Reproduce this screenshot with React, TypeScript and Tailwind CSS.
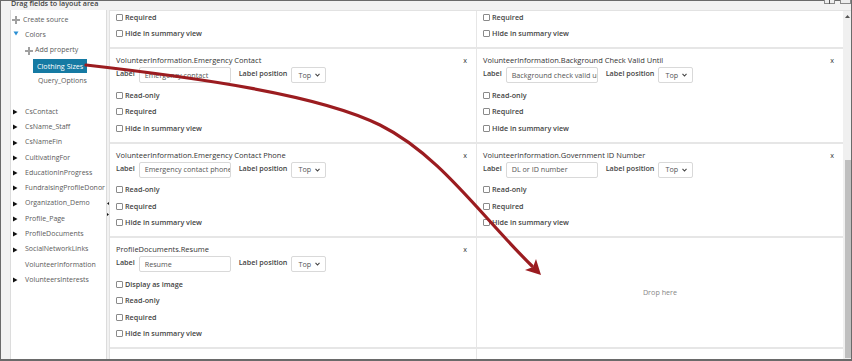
import type { ReactNode } from 'react';

type FieldProps = {
  title: string;
  value: string;
  options: string[];
};

function Check({ label }: { label: string }) {
  return (
    <div className="flex h-[16.5px] items-center gap-[2px]">
      <span className="h-[7px] w-[7px] rounded-[1px] border border-[#8a8a8a] bg-white" />
      <span>{label}</span>
    </div>
  );
}

function Field({ title, value, options }: FieldProps) {
  return (
    <div className="bg-white pb-[5px] pl-[6px] pt-[5px]">
      <div className="flex h-[12px] items-center justify-between pr-[9px] text-[7.5px] font-medium leading-[12px] text-[#333]">
        <span>{title}</span>
        <span className="text-[7.2px] font-normal">x</span>
      </div>
      <div className="mt-[1px] flex h-[16px] items-start">
        <span className="leading-[12px] text-[#444]">Label</span>
        <div className="ml-[4px] flex h-[16px] w-[92px] items-center overflow-hidden whitespace-nowrap rounded-[2px] border border-[#d9d9d9] pl-[5px] font-normal text-[#555]">
          {value}
        </div>
        <span className="ml-[8px] leading-[12px] text-[#444]">Label position</span>
        <div className="ml-[4px] flex h-[16px] w-[35px] items-center justify-between rounded-[2px] border border-[#d9d9d9] pl-[6px] pr-[5px] font-normal text-[#555]">
          <span>Top</span>
          <svg width="5" height="4" viewBox="0 0 5 4">
            <path d="M0.5 0.8 L2.5 3 L4.5 0.8" fill="none" stroke="#444" strokeWidth="1.1" />
          </svg>
        </div>
      </div>
      <div className="mt-[4px] text-[#444]">
        {options.map((o) => (
          <Check key={o} label={o} />
        ))}
      </div>
    </div>
  );
}

function Plus() {
  return (
    <svg width="8" height="8" viewBox="0 0 8 8" className="shrink-0">
      <path d="M4 0 V8 M0 4 H8" stroke="#a0a0a0" strokeWidth="2" />
    </svg>
  );
}

function Tri({ color = '#111' }: { color?: string }) {
  return (
    <svg width="5" height="6" viewBox="0 0 5 6" className="shrink-0">
      <path d="M0 0.5 L4.5 3 L0 5.5 Z" fill={color} />
    </svg>
  );
}

function TreeRow({ children, className = '' }: { children?: ReactNode; className?: string }) {
  return <div className={`flex h-[15.3px] items-center ${className}`}>{children}</div>;
}

const sources = [
  'CsContact',
  'CsName_Staff',
  'CsNameFin',
  'CultivatingFor',
  'EducationInProgress',
  'FundraisingProfileDonor',
  'Organization_Demo',
  'Profile_Page',
  'ProfileDocuments',
  'SocialNetworkLinks',
];

const std = ['Read-only', 'Required', 'Hide in summary view'];

export default function App() {
  return (
    <div className="relative h-[361px] w-[852px] overflow-hidden bg-[#f2f2f2] font-['Open_Sans',sans-serif] text-[7.2px]">
      <div className="flex h-full flex-col border border-b-2 border-[#6a6a6a]">
        <div className="h-[9px] overflow-hidden pl-[10px]">
          <p className="-mt-[3px] font-semibold leading-[10px] text-[#444]">Drag fields to layout area</p>
        </div>

        <div className="flex min-h-0 flex-1">
          {/* source tree */}
          <div className="ml-[9px] w-[97px] overflow-hidden border-x border-[#dcdcdc] bg-white pt-[2.5px] text-[7px] text-[#5a5a5a]">
            <TreeRow className="gap-[3px] pl-[1px]">
              <Plus />
              <span>Create source</span>
            </TreeRow>
            <TreeRow className="pl-[2px]">
              <svg width="6" height="5" viewBox="0 0 6 5" className="-mt-[3px] shrink-0">
                <path d="M0.5 0.5 L5.5 0.5 L3 4.5 Z" fill="#2b8fd3" />
              </svg>
              <span className="ml-[6px]">Colors</span>
            </TreeRow>
            <TreeRow className="gap-[2px] pl-[14px]">
              <Plus />
              <span>Add property</span>
            </TreeRow>
            <TreeRow className="pl-[22px]">
              <span className="flex h-[14px] items-center bg-[#157aa3] px-[4px] text-[7.2px] text-white">Clothing Sizes</span>
            </TreeRow>
            <TreeRow className="pl-[27px]">Query_Options</TreeRow>
            <TreeRow />
            {sources.map((s) => (
              <TreeRow key={s} className="gap-[7px] whitespace-nowrap pl-[2px]">
                <Tri />
                <span>{s}</span>
              </TreeRow>
            ))}
            <TreeRow className="pl-[14px]">VolunteerInformation</TreeRow>
            <TreeRow className="gap-[7px] pl-[2px]">
              <Tri />
              <span>VolunteersInterests</span>
            </TreeRow>
          </div>

          {/* splitter */}
          <div className="flex w-[2px] flex-col items-start pt-[192px]">
            <svg width="2" height="3" viewBox="0 0 2 3">
              <path d="M2 0 L0 1.5 L2 3 Z" fill="#111" />
            </svg>
            <svg width="2" height="3" viewBox="0 0 2 3" className="mt-[8px]">
              <path d="M0 0 L2 1.5 L0 3 Z" fill="#111" />
            </svg>
          </div>

          {/* layout area */}
          <div className="flex min-w-0 flex-1 border-l border-t border-[#e2e2e2] bg-white">
            <div className="grid flex-1 auto-rows-min grid-cols-2 gap-x-[1px] gap-y-[2px] overflow-hidden bg-[#e6e6e6] font-semibold">
              <div className="-mt-[2px] bg-white pb-[5px] pl-[6px] text-[#444]">
                <Check label="Required" />
                <Check label="Hide in summary view" />
              </div>
              <div className="-mt-[2px] bg-white pb-[5px] pl-[6px] text-[#444]">
                <Check label="Required" />
                <Check label="Hide in summary view" />
              </div>

              <Field title="VolunteerInformation.Emergency Contact" value="Emergency contact" options={std} />
              <Field
                title="VolunteerInformation.Background Check Valid Until"
                value="Background check valid until"
                options={std}
              />

              <Field
                title="VolunteerInformation.Emergency Contact Phone"
                value="Emergency contact phone"
                options={std}
              />
              <Field title="VolunteerInformation.Government ID Number" value="DL or ID number" options={std} />

              <Field title="ProfileDocuments.Resume" value="Resume" options={['Display as image', ...std]} />
              <div className="flex items-center justify-center bg-white font-normal text-[#888]">Drop here</div>

              <div className="h-[20px] bg-white" />
              <div className="h-[20px] bg-white" />
            </div>

            {/* scrollbar */}
            <div className="flex w-[8px] flex-col bg-[#f0f0f0]">
              <div className="flex h-[10px] items-center justify-center">
                <svg width="5" height="3" viewBox="0 0 5 3">
                  <path d="M0 3 L2.5 0 L5 3 Z" fill="#555" />
                </svg>
              </div>
              <div className="h-[139px]" />
              <div className="mb-[1px] ml-[2px] flex-1 bg-[#bfbfbf]" />
            </div>
          </div>
        </div>
      </div>

      {/* title bar buttons, cut off at the top */}
      <div className="absolute right-[17px] top-[-8px] flex h-[12px] w-[11px] justify-center border border-[#8a8a8a] bg-[#ededed]">
        <span className="mt-[6px] h-[5px] w-px bg-[#555]" />
      </div>
      <div className="absolute right-[1px] top-[-8px] h-[12px] w-[11px] border border-[#8a8a8a] bg-[#ededed]" />

      {/* drag arrow */}
      <svg className="pointer-events-none absolute inset-0" width="852" height="361" viewBox="0 0 852 361">
        <path
          d="M86 65 C200 78 320 95 380 125 S480 215 532 266"
          fill="none"
          stroke="#9b1c20"
          strokeWidth="3.2"
          strokeLinecap="round"
        />
        <path d="M541 275 L536 259 L533 267 L525 270 Z" fill="#9b1c20" />
      </svg>
    </div>
  );
}
